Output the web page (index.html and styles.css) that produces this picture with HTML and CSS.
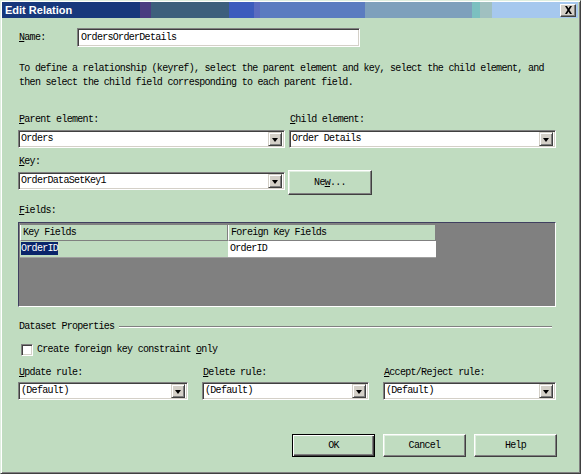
FILE: index.html
```html
<!DOCTYPE html>
<html>
<head>
<meta charset="utf-8">
<title>Edit Relation</title>
<link rel="stylesheet" href="styles.css">
</head>
<body>
<div class="window">
  <div class="titlebar">
    <span class="title">Edit Relation</span>
    <span class="close"><svg width="9" height="8" viewBox="0 0 9 8"><path d="M1 0h2l1.5 2.5L6 0h2L5.5 4 8 8H6L4.5 5.5 3 8H1l2.5-4z" fill="#000"/></svg></span>
  </div>
  <div class="content">
    <div class="name-row">
      <span class="lbl name-lbl"><u>N</u>ame:</span>
      <div class="field name-field">OrdersOrderDetails</div>
    </div>
    <p class="desc">To define a relationship (keyref), select the parent element and key, select the child element, and then select the child field corresponding to each parent field.</p>

    <div class="two-col pc-row">
      <div class="col">
        <span class="lbl"><u>P</u>arent element:</span>
        <div class="combo"><span class="val">Orders</span><span class="drop"><i></i></span></div>
      </div>
      <div class="col">
        <span class="lbl"><u>C</u>hild element:</span>
        <div class="combo"><span class="val">Order Details</span><span class="drop"><i></i></span></div>
      </div>
    </div>

    <div class="two-col key-row">
      <div class="col">
        <span class="lbl"><u>K</u>ey:</span>
        <div class="combo"><span class="val">OrderDataSetKey1</span><span class="drop"><i></i></span></div>
      </div>
      <div class="col">
        <div class="btn new-btn">Ne<u>w</u>...</div>
      </div>
    </div>

    <span class="lbl fields-lbl"><u>F</u>ields:</span>
    <div class="grid">
      <div class="grid-row">
        <div class="hcell">Key Fields</div>
        <div class="hcell">Foreign Key Fields</div>
      </div>
      <div class="grid-row">
        <div class="cell cell-sel"><span class="sel">OrderID</span></div>
        <div class="cell cell-white">OrderID</div>
      </div>
    </div>

    <div class="group-head">
      <span class="lbl">Dataset Properties</span>
      <span class="etch"></span>
    </div>

    <div class="check-row">
      <span class="checkbox"></span>
      <span class="lbl">Create foreign key constraint <u>o</u>nly</span>
    </div>

    <div class="three-col">
      <div class="col">
        <span class="lbl"><u>U</u>pdate rule:</span>
        <div class="combo"><span class="val">(Default)</span><span class="drop"><i></i></span></div>
      </div>
      <div class="col">
        <span class="lbl"><u>D</u>elete rule:</span>
        <div class="combo"><span class="val">(Default)</span><span class="drop"><i></i></span></div>
      </div>
      <div class="col">
        <span class="lbl"><u>A</u>ccept/Reject rule:</span>
        <div class="combo"><span class="val">(Default)</span><span class="drop"><i></i></span></div>
      </div>
    </div>

    <div class="buttons">
      <div class="btn btn-default">OK</div>
      <div class="btn">Cancel</div>
      <div class="btn">Help</div>
    </div>
  </div>
</div>
</body>
</html>
```
FILE: styles.css
```css
* { box-sizing: border-box; }
html, body {
  margin: 0;
  padding: 0;
  background: #c0dcc0;
}
body {
  font-family: "Liberation Mono", monospace;
  font-size: 10px;
  letter-spacing: -0.7px;
  color: #000;
}
.window {
  width: 581px;
  height: 474px;
  border-style: solid;
  border-width: 1px;
  border-color: #dfeedf #404040 #404040 #dfeedf;
  box-shadow: inset 1px 1px #ffffff, inset -1px -1px #808080;
  padding: 1px 2px 2px 1px;
  background: #c0dcc0;
  display: flex;
  flex-direction: column;
}
.titlebar {
  height: 16px;
  display: flex;
  align-items: center;
  justify-content: space-between;
  padding: 0 2px 0 3px;
  background: linear-gradient(to right,
    #17387c 0px, #17387c 138px,
    #4a3c80 138px, #4a3c80 149px,
    #3d5f7c 149px, #3d5f7c 227px,
    #3c5bbd 227px, #3c5bbd 252px,
    #5b6cc0 252px, #5b6cc0 258px,
    #5b7cc0 258px, #5b7cc0 363px,
    #7ea0bc 363px, #7ea0bc 470px,
    #7bc0c0 470px, #7bc0c0 478px,
    #a0c0c0 478px, #a0c0c0 490px,
    #a6c8ee 490px, #a6c8ee 100%);
}
.title {
  color: #fff;
  font-family: "Liberation Sans", Arial, sans-serif;
  font-weight: bold;
  font-size: 11px;
  letter-spacing: 0;
}
.close {
  width: 16px;
  height: 13px;
  background: #d4d0c8;
  border: 1px solid;
  border-color: #fff #404040 #404040 #fff;
  box-shadow: inset -1px -1px #808080;
  display: flex;
  align-items: center;
  justify-content: center;
}
.content {
  padding: 0 0 0 16px;
  width: 556px;
  display: flex;
  flex-direction: column;
}
.lbl {
  display: block;
  line-height: 14px;
  height: 14px;
  padding-left: 1px;
  white-space: nowrap;
}
u { text-decoration: underline; text-underline-offset: 1px; }

.name-row {
  margin-top: 10px;
  display: flex;
  align-items: center;
}
.name-lbl { width: 59px; }
.field {
  height: 19px;
  background: #fff;
  border: 1px solid;
  border-color: #808080 #fff #fff #808080;
  box-shadow: inset 1px 1px #404040, inset -1px -1px #d4d0c8;
  padding: 0 3px;
  line-height: 17px;
}
.name-field { width: 283px; }
.desc {
  margin: 15px 0 0 1px;
  line-height: 14px;
  width: 534px;
}
.two-col {
  display: grid;
  grid-template-columns: 267px 267px;
  column-gap: 4px;
}
.pc-row { margin-top: 23px; }
.key-row { margin-top: 7px; }
.col { display: flex; flex-direction: column; }
.col .lbl { margin-bottom: 3px; }
.combo {
  height: 18px;
  display: flex;
  align-items: center;
  justify-content: space-between;
  background: #fff;
  border: 1px solid;
  border-color: #808080 #fff #fff #808080;
  box-shadow: inset 1px 1px #404040, inset -1px -1px #d4d0c8;
  padding: 1px 2px 1px 2px;
}
.val { line-height: 14px; }
.drop {
  width: 14px;
  height: 14px;
  background: #d4d0c8;
  border: 1px solid;
  border-color: #d4d0c8 #404040 #404040 #d4d0c8;
  box-shadow: inset 1px 1px #fff, inset -1px -1px #808080;
  display: flex;
  align-items: center;
  justify-content: center;
}
.drop i {
  width: 0;
  height: 0;
  border-left: 3px solid transparent;
  border-right: 3px solid transparent;
  border-top: 4px solid #000;
  margin-top: 1px;
}
.btn {
  height: 23px;
  width: 83px;
  border: 1px solid;
  border-color: #fff #404040 #404040 #fff;
  box-shadow: inset -1px -1px #808080, inset 1px 1px #dfeedf;
  display: flex;
  align-items: center;
  justify-content: center;
}
.new-btn {
  margin-top: 15px;
  width: 84px;
  height: 25px;
  margin-left: -1px;
}
.fields-lbl { margin-top: 9px; }
.grid {
  margin-top: 4px;
  height: 85px;
  width: 538px;
  background: #808080;
  border: 1px solid;
  border-color: #404060 #fff #fff #404060;
  box-shadow: inset 1px 1px #808080;
  padding: 2px 0 0 1px;
}
.grid-row { display: flex; }
.hcell {
  width: 208px;
  height: 16px;
  background: #c0dcc0;
  border-left: 1px solid #fff;
  border-bottom: 1px solid #808080;
  border-right: 1px solid #808080;
  line-height: 15px;
  padding-left: 2px;
}
.cell {
  width: 208px;
  height: 17px;
  line-height: 16px;
  border-bottom: 1px solid #a0a0a0;
}
.cell-sel { background: #c0dcc0; padding-left: 1px; }
.cell-white { background: #fff; padding-left: 2px; }
.sel { background: #0a246a; color: #fff; padding: 1px 0; }
.group-head {
  margin-top: 13px;
  display: flex;
  align-items: center;
}
.etch {
  flex: 1;
  margin-left: 5px;
  margin-right: 6px;
  height: 2px;
  border-top: 1px solid #808080;
  border-bottom: 1px solid #fff;
}
.check-row {
  margin-top: 9px;
  display: flex;
  align-items: center;
  padding-left: 3px;
}
.checkbox {
  width: 12px;
  height: 12px;
  background: #fff;
  border: 1px solid;
  border-color: #808080 #fff #fff #808080;
  box-shadow: inset 1px 1px #404040, inset -1px -1px #d4d0c8;
  margin-right: 3px;
}
.three-col {
  margin-top: 9px;
  display: grid;
  grid-template-columns: 170px 167px 173px;
  column-gap: 14px;
}
.three-col .col .lbl { margin-bottom: 2px; }
.buttons {
  margin-top: 34px;
  display: flex;
  justify-content: flex-end;
  gap: 8px;
  margin-right: 1px;
}
.btn-default {
  border-color: #000;
  box-shadow: inset 1px 1px #fff, inset -1px -1px #404040, inset -2px -2px #808080;
}
```
